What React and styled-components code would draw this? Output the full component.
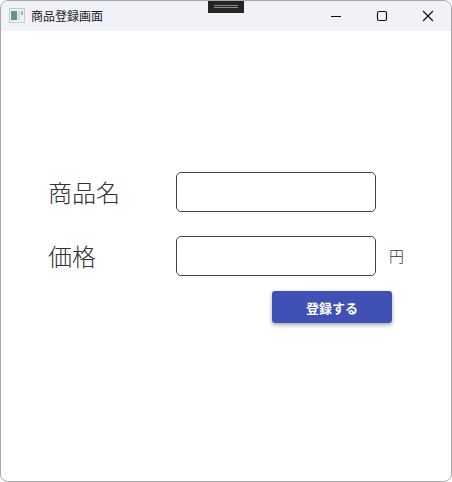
import styled, { createGlobalStyle } from 'styled-components';

const GlobalStyle = createGlobalStyle`
  html, body {
    margin: 0;
    padding: 0;
    background: #fff;
  }
  * {
    box-sizing: border-box;
  }
`;

const Window = styled.div`
  position: relative;
  width: 452px;
  height: 482px;
  display: flex;
  flex-direction: column;
  background: #fff;
  border: 1px solid #a8a8a8;
  border-radius: 8px;
  overflow: hidden;
  font-family: "Noto Sans CJK JP", "Noto Sans", sans-serif;
`;

const TitleBar = styled.header`
  height: 30px;
  flex: none;
  display: flex;
  align-items: center;
  padding-left: 8px;
  background: #f0f2f8;
`;

const AppIcon = styled.svg`
  width: 16px;
  height: 15px;
  margin-right: 6px;
  margin-bottom: 2px;
`;

const Title = styled.span`
  flex: 1;
  padding-bottom: 2px;
  font-size: 12px;
  color: #1a1a1a;
`;

const WindowButton = styled.button`
  width: 46px;
  height: 30px;
  padding: 0 0 1px;
  border: 0;
  background: none;
  display: flex;
  align-items: center;
  justify-content: center;
`;

const DragHandle = styled.div`
  position: absolute;
  top: -1px;
  left: 207px;
  width: 36px;
  height: 13px;
  background: #242424;
  display: flex;
  flex-direction: column;
  align-items: center;
  padding-top: 5px;
  gap: 1px;

  &::before,
  &::after {
    content: '';
    width: 24px;
    height: 1px;
    background: #8a8a8a;
  }
`;

const Form = styled.form`
  display: flex;
  flex-direction: column;
  padding: 141px 0 0 47px;
`;

const Row = styled.div`
  display: flex;
  align-items: center;
  height: 40px;
  margin-bottom: 24px;
`;

const Label = styled.label`
  width: 128px;
  padding-bottom: 2px;
  font-size: 24px;
  font-weight: 300;
  color: #333;
`;

const Input = styled.input`
  width: 200px;
  height: 40px;
  border: 1px solid #444;
  border-radius: 5px;
  background: #fff;
  outline: none;
`;

const Unit = styled.span`
  margin-left: 13px;
  padding-bottom: 2px;
  font-size: 15px;
  font-weight: 300;
  color: #333;
`;

const Actions = styled.div`
  margin-top: -9px;
  padding-left: 224px;
`;

const SubmitButton = styled.button`
  width: 120px;
  height: 32px;
  padding: 0;
  border: 0;
  border-radius: 3px;
  background: #3f51b5;
  color: #fff;
  font-family: inherit;
  font-size: 13px;
  font-weight: 700;
  box-shadow: 0 2px 4px rgba(0, 0, 0, 0.35);
`;

const App = () => {
  return (
    <>
      <GlobalStyle />
      <Window>
        <TitleBar>
          <AppIcon viewBox="0 0 16 15">
            <rect x="0.5" y="0.5" width="15" height="14" fill="#eef1f2" stroke="#c4cacd" />
            <rect x="2" y="3" width="6" height="9" fill="#5f9494" />
            <rect x="9" y="3" width="2" height="9" fill="#d2dadd" />
            <rect x="12" y="3" width="2" height="4" fill="#a3b4bb" />
          </AppIcon>
          <Title>商品登録画面</Title>
          <WindowButton aria-label="最小化">
            <svg width="12" height="12" viewBox="0 0 12 12">
              <path d="M1 6.5h10" stroke="#111" strokeWidth="1.2" />
            </svg>
          </WindowButton>
          <WindowButton aria-label="最大化">
            <svg width="12" height="12" viewBox="0 0 12 12">
              <rect x="1.5" y="1.5" width="9" height="9" rx="1.5" fill="none" stroke="#111" strokeWidth="1.2" />
            </svg>
          </WindowButton>
          <WindowButton aria-label="閉じる">
            <svg width="12" height="12" viewBox="0 0 12 12">
              <path d="M1 1l10 10M11 1L1 11" stroke="#111" strokeWidth="1.2" />
            </svg>
          </WindowButton>
        </TitleBar>
        <DragHandle />
        <Form>
          <Row>
            <Label>商品名</Label>
            <Input type="text" />
          </Row>
          <Row>
            <Label>価格</Label>
            <Input type="text" />
            <Unit>円</Unit>
          </Row>
          <Actions>
            <SubmitButton type="button">登録する</SubmitButton>
          </Actions>
        </Form>
      </Window>
    </>
  );
};

export default App;
